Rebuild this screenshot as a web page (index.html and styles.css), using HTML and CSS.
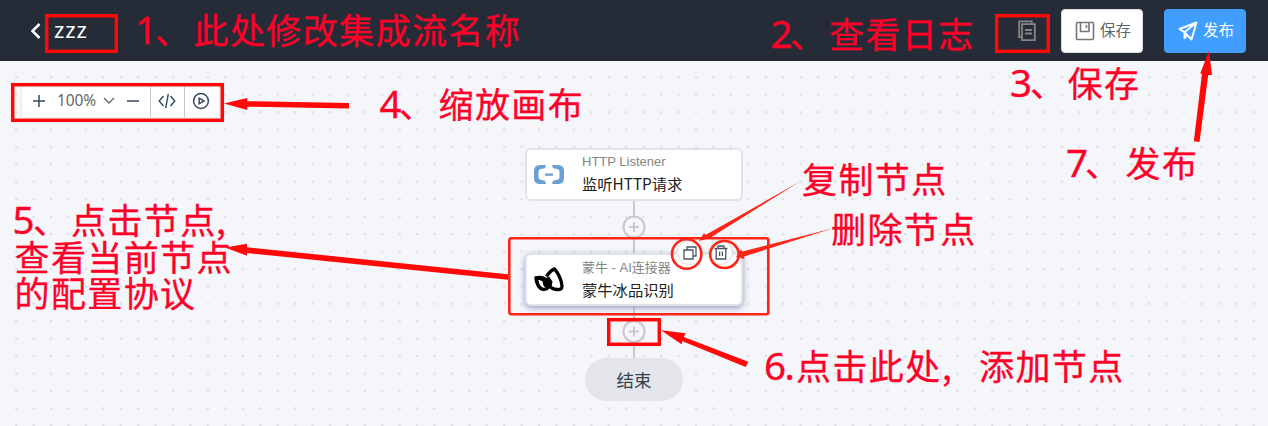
FILE: index.html
```html
<!DOCTYPE html>
<html lang="zh-CN">
<head>
<meta charset="utf-8">
<title>集成流</title>
<link rel="stylesheet" href="styles.css">
</head>
<body>
<div class="app">
  <header class="header">
    <div class="title">
      <svg class="back" width="12" height="18" viewBox="0 0 12 18"><path d="M9.5 2 2.5 9l7 7" fill="none" stroke="#fff" stroke-width="2.5"/></svg>
      <span class="flow-name">zzz</span>
    </div>
    <div class="actions">
      <svg class="log" width="20" height="22" viewBox="0 0 20 22" fill="none" stroke="#858585" stroke-width="1.8"><path d="M4 17.2H2.2V1.3h12.6v2"/><path d="M5 4.2h12.8v16H5zM8 10h7M8 13.5h7"/></svg>
      <button class="btn btn-save">
        <svg width="20" height="20" viewBox="0 0 20 20" fill="none" stroke="#777" stroke-width="1.6"><rect x="1.5" y="1.5" width="17" height="17" rx="1"/><path d="M5.5 2v8.5h8.5V2M11.5 4v3"/></svg>
        <span>保存</span>
      </button>
      <button class="btn btn-publish">
        <svg width="20" height="20" viewBox="0 0 20 20" fill="none" stroke="#fff" stroke-width="1.9" stroke-linejoin="round"><path d="M18.5 1.500 1.500 8l5 3.200L13.500 18.500zM6.500 11.200l12-9.700M6.500 11.200v6l3-3"/></svg>
        <span>发布</span>
      </button>
    </div>
  </header>
  <main class="canvas">
    <svg class="grid" width="1268" height="365">
      <defs><pattern id="dots" x="7.300" y="7.300" width="17.430" height="17.430" patternUnits="userSpaceOnUse"><circle cx="8.900" cy="8.900" r="1.150" fill="#d9dbe0"/></pattern></defs>
      <rect width="1268" height="365" fill="url(#dots)"/>
    </svg>
    <div class="toolbar">
      <div class="zoom">
        <svg width="12" height="12" viewBox="0 0 12 12"><path d="M0 6h12M6 0v12" stroke="#34495e" stroke-width="1.500"/></svg>
        <span>100%</span>
        <svg class="chevron" width="12" height="8" viewBox="0 0 12 8"><path d="M1 1l5 5 5-5" fill="none" stroke="#666" stroke-width="1.400"/></svg>
        <svg width="12" height="12" viewBox="0 0 12 12"><path d="M0 6h12" stroke="#34495e" stroke-width="1.500"/></svg>
      </div>
      <div class="tool"><svg width="18" height="16" viewBox="0 0 18 16" fill="none" stroke="#34495e" stroke-width="1.400"><path d="M5.500 3 1.200 8l4.300 5M12.500 3l4.300 5-4.300 5M10.300 .8 7.700 15.200"/></svg></div>
      <div class="tool"><svg width="18" height="18" viewBox="0 0 18 18" fill="none" stroke="#34495e" stroke-width="1.500"><circle cx="9" cy="9" r="7.400"/><path d="M7.200 6.200v5.600L12 9z"/></svg></div>
    </div>
    <div class="flow">
      <article class="node">
        <svg class="node-icon" width="30" height="20" viewBox="0 0 30 20" fill="#6a9fd4"><path d="M12 0H6Q0 0 0 6v7q0 6 6 6h6l-1-3.300-4.500-.9Q4.500 14.500 4.500 12V7q0-2.500 2-2.900L11 3.300zM18 0h6q6 0 6 6v7q0 6-6 6h-6l1-3.300 4.500-.9q2-.3 2-2.800V7q0-2.500-2-2.900L19 3.300zM11 8.500h8v2.200h-8z"/></svg>
        <div class="node-text"><span class="node-type">HTTP Listener</span><span class="node-name">监听HTTP请求</span></div>
      </article>
      <div class="link"><svg width="24" height="52" viewBox="0 0 24 52" fill="none" stroke="#c8c9cb" stroke-width="2"><path d="M12 0v15M12 37v15M7 26h10M12 21v10"/><circle cx="12" cy="26" r="10.500"/></svg></div>
      <article class="node node-active">
        <svg class="node-icon" width="30" height="25" viewBox="0 0 30 25" fill="none" stroke="#000" stroke-width="3.300" stroke-linejoin="round"><path d="M12.500 9.500C15 5.500 17.500 3 20.500 1.900c3.800 4.500 7 12 7.500 17.300.2 2.800-2 3.600-5 3.300-3.500-.3-6.500-1.800-8-4"/><path d="M1.500 10.500C8 9 14 11 16 18c-1.500 3.500-4.200 5-7 4.800-4.500-1-7.300-6.800-7.500-12.300z" fill="#000" stroke-width="2.500"/><path d="M11.500 11.500l3.500-2 3.500 5-1 5z" fill="#000" stroke="none"/><path d="M4.500 13c1.500 0 3 .5 4.300 1.800-.3 2.200.7 4.400 2.700 6-4 .5-6.500-3-7-7.800z" fill="#fff" stroke="none"/></svg>
        <div class="node-text"><span class="node-type">蒙牛 - AI连接器</span><span class="node-name">蒙牛冰品识别</span></div>
        <div class="node-tools">
          <span class="round"><svg width="14" height="14" viewBox="0 0 14 14" fill="none" stroke="#4b5563" stroke-width="1.300"><path d="M1 4h9v9H1zM4 4V1h9v9h-3"/></svg></span>
          <span class="round"><svg width="14" height="15" viewBox="0 0 14 15" fill="none" stroke="#4b5563" stroke-width="1.300"><path d="M.5 3.500h13M4 3V1h6v2M2.200 4v10h9.600V4M5.600 6.500v4.500M8.400 6.500v4.500"/></svg></span>
        </div>
      </article>
      <div class="link"><svg width="24" height="53" viewBox="0 0 24 53" fill="none" stroke="#c8c9cb" stroke-width="2"><path d="M12 0v15M12 37v16M7 25.500h10M12 20.500v10"/><circle cx="12" cy="25.500" r="10.500"/></svg></div>
      <div class="end">结束</div>
    </div>
  </main>

  <svg class="notes" width="1268" height="426" viewBox="0 0 1268 426">
    <g class="boxes">
      <rect x="46.700" y="15.700" width="69.600" height="35.600"/>
      <rect x="996.700" y="15.700" width="51.600" height="35.600"/>
      <rect x="12.700" y="84.700" width="209.600" height="35.600"/>
      <rect x="608.700" y="319.700" width="50.600" height="24.600"/>
    </g>
    <g class="marks">
      <rect x="509.300" y="238.300" width="259" height="76" rx="2"/>
      <ellipse cx="686.700" cy="254" rx="14.700" ry="14.700"/>
      <ellipse cx="724.500" cy="254.500" rx="14.300" ry="13.500"/>
    </g>
    <g class="arrows">
      <path d="M224 103.500 247.300 98v3.200L349 103v5.600L247.300 106.700V110z"/>
      <path d="M225 247.500 247 243.800v3.400l261 27.100v5.400L247 253v2.800z"/>
      <path d="M661 330.300 685.700 333.300 683.800 337 748.300 361.700 745.700 367 682.500 341.300 681.500 344.300z"/>
      <path d="M1209 51 1212 75h-3.800L1199.500 142l-5.700-.8 8.200-67.400-1.800-.3z"/>
    </g>
    <g class="thin-arrows">
      <path d="M699 241l5-8 1.500 2L800 181.500 709.500 238.300z"/>
      <path d="M736 257l5-7.500 1.500 2L833 228.300 744 256.500l.5 2.500z"/>
    </g>
    <g class="labels">
      <text y="43.500"><tspan class="num" x="135">1</tspan><tspan x="155">、</tspan><tspan x="193.500">此处修改集成流名称</tspan></text>
      <text y="47.500"><tspan class="num" x="770.500">2</tspan><tspan x="790">、</tspan><tspan x="829">查看日志</tspan></text>
      <text y="97"><tspan class="num" x="1010">3</tspan><tspan x="1030">、</tspan><tspan x="1067.500">保存</tspan></text>
      <text y="117.500"><tspan class="num" x="379.500">4</tspan><tspan x="399">、</tspan><tspan x="438.500">缩放画布</tspan></text>
      <text y="233.500"><tspan class="num" x="12.500">5</tspan><tspan x="33">、</tspan><tspan x="71">点击节点</tspan><tspan x="216">,</tspan></text>
      <text x="14.500" y="270.500">查看当前节点</text>
      <text x="14.500" y="307">的配置协议</text>
      <text y="380"><tspan class="num" x="764">6</tspan><tspan class="num" x="784.500">.</tspan><tspan x="796">点击此处</tspan><tspan x="942">,</tspan><tspan x="979">添加节点</tspan></text>
      <text y="177"><tspan class="num" x="1066">7</tspan><tspan x="1085">、</tspan><tspan x="1125.500">发布</tspan></text>
      <text x="802" y="193">复制节点</text>
      <text x="831" y="243">删除节点</text>
    </g>
  </svg>
</div>
</body>
</html>
```
FILE: styles.css
```css
* { box-sizing: border-box; }
body {
  margin: 0;
  font-family: "Noto Sans CJK SC", "Noto Sans", sans-serif;
}
.app {
  position: relative;
  width: 1268px;
  height: 426px;
  overflow: hidden;
  background: #f4f6fa;
}
.header {
  display: flex;
  align-items: center;
  justify-content: space-between;
  height: 61px;
  padding: 0 22px 0 30px;
  background: #262c37;
}
.title { display: flex; align-items: center; gap: 12px; color: #fff; }
.flow-name { padding-bottom: 3px; font: 22px/30px "Noto Sans", sans-serif; letter-spacing: .9px; }
.actions { display: flex; align-items: center; }
.log { margin-right: 24px; }
.btn {
  display: flex;
  align-items: center;
  gap: 5px;
  width: 82px;
  height: 44px;
  padding: 0 0 0 13px;
  border: 1px solid #dcdfe6;
  border-radius: 4px;
  background: #fff;
  color: #606266;
  font: 15.5px/20px "Noto Sans CJK SC", sans-serif;
}
.btn span { padding-bottom: 3px; }
.btn-publish { margin-left: 21px; border-color: #409eff; background: #409eff; color: #fff; }

.canvas { position: relative; height: 365px; }
.grid { position: absolute; left: 0; top: 0; }
.toolbar {
  position: absolute;
  left: 22px;
  top: 24px;
  display: flex;
  width: 197px;
  height: 32px;
  background: #fff;
  box-shadow: 0 0 2px #cfd2d8;
}
.zoom {
  display: flex;
  align-items: center;
  gap: 12px;
  width: 128px;
  padding-left: 11px;
  color: #666;
  font: 15.500px/20px "Noto Sans", sans-serif;
}
.chevron { margin-left: -8px; }
.zoom span { width: 42px; padding-bottom: 2px; letter-spacing: -.1px; }
.tool {
  display: flex;
  align-items: center;
  justify-content: center;
  width: 34px;
  padding-right: 2px;
  border-left: 1px solid #c4c6ca;
}
.tool svg { flex: none; }
.flow {
  position: relative;
  display: flex;
  flex-direction: column;
  align-items: center;
  padding-top: 87px;
}
.node {
  position: relative;
  display: flex;
  align-items: center;
  gap: 18px;
  width: 218px;
  height: 53px;
  padding-left: 7px;
  border: 2px solid #e1e3e8;
  border-radius: 6px;
  background: #fff;
}
.node-active { box-shadow: 0 2px 6px #929dbd; }
.node-text { display: flex; flex-direction: column; padding-bottom: 3px; white-space: nowrap; }
.node-active .node-text { padding-bottom: 2px; }
.node-type {
  color: #858585;
  font: 13px/20px "Liberation Sans", "Noto Sans CJK SC", sans-serif;
}
.node-name { color: #222; font-size: 15.3px; line-height: 22px; }
.node-tools { position: absolute; right: 8px; top: -15px; display: flex; gap: 6px; }
.round {
  display: flex;
  align-items: center;
  justify-content: center;
  width: 25px;
  height: 25px;
  border: 1px solid #ddd;
  border-radius: 50%;
  background: #fff;
}
.link { display: flex; height: 52px; }
.end {
  width: 98px;
  height: 43px;
  border-radius: 22px;
  background: #e3e5ea;
  color: #34424f;
  font-size: 17.400px;
  line-height: 43px;
  text-align: center;
}

.notes { position: absolute; left: 0; top: 0; }
.boxes rect { fill: none; stroke: #ff0808; stroke-width: 3.500; }
.marks { fill: none; stroke: #ff2418; stroke-width: 2.600; }
.arrows { fill: #ff0808; }
.thin-arrows { fill: #ff2418; }
.labels {
  fill: #ff0028;
  stroke: #ff0028;
  stroke-width: .3;
  font-size: 35px;
  letter-spacing: 1.400px;
}
.num { font-family: "Noto Sans", sans-serif; font-size: 38.500px; letter-spacing: 0; }
```
